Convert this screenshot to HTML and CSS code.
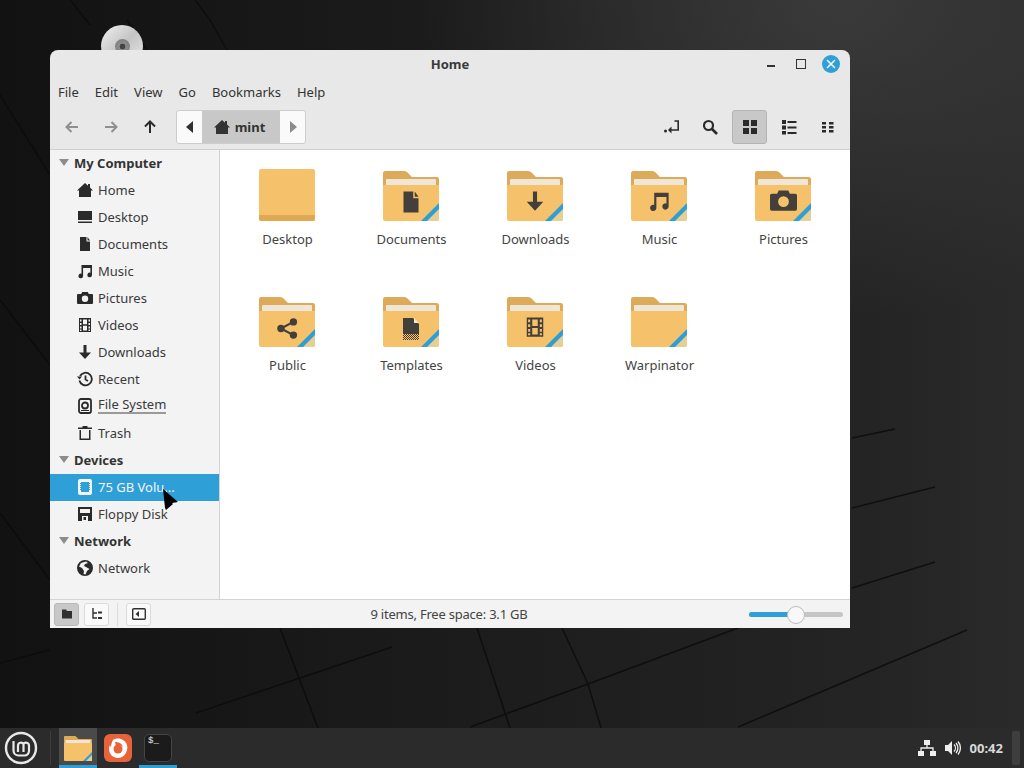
FILE: index.html
```html
<!DOCTYPE html>
<html lang="en">
<head>
    <meta charset="UTF-8">
    <title>Home</title>
    <link rel="stylesheet" href="styles.css">
</head>
<body>
    <svg class="defs" width="0" height="0">
        <defs>
            <pattern id="dither" width="2" height="2" patternUnits="userSpaceOnUse"><path d="M0 0h1v1H0zM1 1h1v1H1z" fill="#433f3b"/></pattern>
            <symbol id="folder" viewBox="0 0 56 50">
                <path d="M2 0h19c2 0 3 1 4 2l4 4h25c1 0 2 1 2 2v14H0V2c0-1 1-2 2-2z" fill="#dcaa58"/>
                <rect x="3" y="8" width="50" height="8" rx="1" fill="#efe6d6"/>
                <path d="M0 14h56v34c0 1-1 2-2 2H2c-1 0-2-1-2-2z" fill="#f6c16b"/>
                <path d="M56 38v10c0 1-1 2-2 2H44z" fill="#e6cf95"/>
                <path d="M56 32v6L44 50h-6z" fill="#2e9fd6"/>
            </symbol>
            <symbol id="i-home" viewBox="0 0 16 16"><path d="M8 1l3 2.700V2h2v3.500L16 8.500h-2V15H2V8.500H0z" fill="currentColor"/></symbol>
            <symbol id="i-desktop" viewBox="0 0 16 16"><path d="M1 2h14v9H1zM1 12.500h14V14H1z" fill="currentColor"/></symbol>
            <symbol id="i-doc" viewBox="0 0 16 16"><path d="M3 1h6.500v4.500H13V15H3zM10.500 1L13 4.500h-2.500z" fill="currentColor"/></symbol>
            <symbol id="i-music" viewBox="0 0 16 16"><path d="M4.500 2H15v10a2.300 2.300 0 1 1-1.600-2.200V5H6.100v8a2.300 2.300 0 1 1-1.600-2.200z" fill="currentColor"/></symbol>
            <symbol id="i-camera" viewBox="0 0 16 16"><path fill-rule="evenodd" d="M1 4h3.200l1-2h5.600l1 2H15a1 1 0 0 1 1 1v8a1 1 0 0 1-1 1H1a1 1 0 0 1-1-1V5a1 1 0 0 1 1-1zm7 1.500a3.200 3.200 0 1 0 0 6.400 3.200 3.200 0 0 0 0-6.400z" fill="currentColor"/></symbol>
            <symbol id="i-film" viewBox="0 0 16 16"><path fill-rule="evenodd" d="M2 1h12v14H2zM3 2.500v2h1.500v-2zM3 6v2h1.500V6zM3 9.500v2h1.500v-2zM3 12.500V14h1.500v-1.500zM11.500 2.500v2H13v-2zM11.500 6v2H13V6zM11.500 9.500v2H13v-2zM11.500 12.500V14H13v-1.500zM6 2.500V7.300h4V2.500zM6 8.700v4.800h4V8.700z" fill="currentColor"/></symbol>
            <symbol id="i-down" viewBox="0 0 16 16"><path d="M6.500 1h3v7.500H14L8 15 2 8.500h4.500z" fill="currentColor"/></symbol>
            <symbol id="i-recent" viewBox="0 0 16 16"><path d="M3 5a6.300 6.300 0 1 1-.6 4.500M8.500 4.500V8.500l2.500 1.500" fill="none" stroke="currentColor" stroke-width="1.800"/><path d="M0 5.500h5L2.500 8.500z" fill="currentColor"/></symbol>
            <symbol id="i-disk" viewBox="0 0 16 16"><rect x="2" y="1" width="12" height="14" rx="2" fill="none" stroke="currentColor" stroke-width="1.800"/><circle cx="8" cy="7.500" r="3" fill="none" stroke="currentColor" stroke-width="1.800"/><rect x="4" y="12" width="8" height="1" fill="currentColor"/></symbol>
            <symbol id="i-trash" viewBox="0 0 16 16"><path d="M5.500 1h5v1.500H15V4H1V2.500h4.500zM2.500 5H4v8.500h8V5h1.500v10h-11z" fill="currentColor"/></symbol>
            <symbol id="i-chip" viewBox="0 0 16 16"><path fill-rule="evenodd" d="M3 0h10a2 2 0 0 1 2 2v12a2 2 0 0 1-2 2H3a2 2 0 0 1-2-2V2a2 2 0 0 1 2-2zm1 3v1H3v1h1v1H3v1h1v1H3v1h1v1H3v1h1v2h8v-2h1v-1h-1V9h1V8h-1V7h1V6h-1V5h1V4h-1V3z" fill="currentColor"/></symbol>
            <symbol id="i-floppy" viewBox="0 0 16 16"><path fill-rule="evenodd" d="M1 1h14v14H1zM3 3v4h10V3zM5 10v5h6v-5zM6.500 11H9v3H6.500z" fill="currentColor"/></symbol>
            <symbol id="i-globe" viewBox="0 0 16 16"><path fill-rule="evenodd" d="M8 0a8 8 0 1 1 0 16A8 8 0 0 1 8 0zM4 3L2 6.500l3 1.500 2 3-.5 3 2 .5 1.500-3.500 2.500-2L9 7 7 6l1-2 3-1-2-1.500z" fill="currentColor"/></symbol>
            <symbol id="i-share" viewBox="0 0 16 16"><circle cx="12.500" cy="3" r="2.800" fill="currentColor"/><circle cx="3" cy="8" r="2.800" fill="currentColor"/><circle cx="12.500" cy="13" r="2.800" fill="currentColor"/><path d="M3 8l9.500-5M3 8l9.500 5" stroke="currentColor" stroke-width="1.600"/></symbol>
        </defs>
    </svg>

    <main class="desktop">
        <svg class="wallpaper" viewBox="0 0 1024 728" width="1024" height="728">
            <g fill="none" stroke="#0c0c0c" stroke-width="1.500" opacity=".85">
                <path d="M280 628L318 728M477 628L510 728M562 628L588 684L601 728M738 628L588 684L470 727M967 630L738 727"/>
                <path d="M0 663L50 650M392 647L196 713M0 513L50 580M0 300L50 365M0 95L50 175"/>
                <path d="M127 20L147 50M210 20L227 50M70 0L90 25M195 0L210 20"/>
                <path d="M852 438L895 429M852 508L935 487M852 588L935 562"/>
            </g>
        </svg>

        <div class="disc"><span class="disc-hole"></span></div>

        <section class="window">
            <header class="titlebar">
                <h1>Home</h1>
                <div class="win-controls">
                    <span class="win-min"></span>
                    <span class="win-max"></span>
                    <span class="win-close">
                        <svg width="10" height="10" viewBox="0 0 10 10"><path d="M1 1l8 8M9 1l-8 8" stroke="#fff" stroke-width="1.500"/></svg>
                    </span>
                </div>
            </header>

            <nav class="menubar">
                <span>File</span><span>Edit</span><span>View</span><span>Go</span><span>Bookmarks</span><span>Help</span>
            </nav>

            <div class="toolbar">
                <div class="nav-buttons">
                    <button class="tool dim"><svg width="16" height="16" viewBox="0 0 16 16"><path d="M14 8H3M7.500 3L2.500 8l5 5" fill="none" stroke="currentColor" stroke-width="2"/></svg></button>
                    <button class="tool dim"><svg width="16" height="16" viewBox="0 0 16 16"><path d="M2 8h11M8.500 3l5 5-5 5" fill="none" stroke="currentColor" stroke-width="2"/></svg></button>
                    <button class="tool"><svg width="16" height="16" viewBox="0 0 16 16"><path d="M8 14V3M3 7.500L8 2.500l5 5" fill="none" stroke="currentColor" stroke-width="2"/></svg></button>
                </div>
                <div class="pathbar">
                    <button class="path-arrow"><svg width="8" height="12" viewBox="0 0 8 12"><path d="M7 0v12L0 6z" fill="#303030"/></svg></button>
                    <button class="path-current"><svg width="16" height="16"><use href="#i-home"/></svg>mint</button>
                    <button class="path-arrow"><svg width="8" height="12" viewBox="0 0 8 12"><path d="M1 0v12l7-6z" fill="#8c8c8c"/></svg></button>
                </div>
                <div class="view-buttons">
                    <button class="tool"><svg width="16" height="16" viewBox="0 0 16 16"><path d="M10.500 2H14.200V11H6" fill="none" stroke="currentColor" stroke-width="1.600"/><path d="M7.500 7.500L4 11l3.500 3.500z" fill="currentColor"/><circle cx="1.500" cy="12" r="1.500" fill="currentColor"/></svg></button>
                    <button class="tool"><svg width="16" height="16" viewBox="0 0 16 16"><circle cx="5.500" cy="6.500" r="4.500" fill="none" stroke="currentColor" stroke-width="2.200"/><path d="M9 10l5 5" stroke="currentColor" stroke-width="2.600"/></svg></button>
                    <button class="tool active"><svg width="16" height="16" viewBox="0 0 16 16"><path d="M1 1h6v6H1zM9 1h6v6H9zM1 9h6v6H1zM9 9h6v6H9z" fill="currentColor"/></svg></button>
                    <button class="tool"><svg width="16" height="16" viewBox="0 0 16 16"><path d="M1 1h4v4H1zM1 6.500h4v4H1zM1 12h4v3.500H1zM6.500 2h9v2h-9zM6.500 7.500h9v2h-9zM6.500 13h9v2h-9z" fill="currentColor"/></svg></button>
                    <button class="tool"><svg width="16" height="16" viewBox="0 0 16 16"><path d="M2 3h4v2.500H2zM9 3h4.500v2.500H9zM2 7h4v2.500H2zM9 7h4.500v2.500H9zM2 11h4v2.500H2zM9 11h4.500v2.500H9z" fill="currentColor"/></svg></button>
                </div>
            </div>

            <div class="panes">
                <aside class="sidebar">
                    <div class="side-head"><span class="caret"></span>My Computer</div>
                    <div class="side-row"><svg width="16" height="16"><use href="#i-home"/></svg>Home</div>
                    <div class="side-row"><svg width="16" height="16"><use href="#i-desktop"/></svg>Desktop</div>
                    <div class="side-row"><svg width="16" height="16"><use href="#i-doc"/></svg>Documents</div>
                    <div class="side-row"><svg width="16" height="16"><use href="#i-music"/></svg>Music</div>
                    <div class="side-row"><svg width="16" height="16"><use href="#i-camera"/></svg>Pictures</div>
                    <div class="side-row"><svg width="16" height="16"><use href="#i-film"/></svg>Videos</div>
                    <div class="side-row"><svg width="16" height="16"><use href="#i-down"/></svg>Downloads</div>
                    <div class="side-row"><svg width="16" height="16"><use href="#i-recent"/></svg>Recent</div>
                    <div class="side-row"><svg width="16" height="16"><use href="#i-disk"/></svg><span class="usage">File System</span></div>
                    <div class="side-row"><svg width="16" height="16"><use href="#i-trash"/></svg>Trash</div>
                    <div class="side-head"><span class="caret"></span>Devices</div>
                    <div class="side-row selected"><svg width="16" height="16"><use href="#i-chip"/></svg>75 GB Volu...</div>
                    <div class="side-row"><svg width="16" height="16"><use href="#i-floppy"/></svg>Floppy Disk</div>
                    <div class="side-head"><span class="caret"></span>Network</div>
                    <div class="side-row"><svg width="16" height="16"><use href="#i-globe"/></svg>Network</div>
                </aside>

                <div class="files">
                    <div class="file">
                        <svg width="56" height="52" viewBox="0 0 56 52"><rect width="56" height="52" rx="2" fill="#f6c16b"/><path d="M0 46h56v4c0 1-1 2-2 2H2c-1 0-2-1-2-2z" fill="#dfa954"/></svg>
                        <span>Desktop</span>
                    </div>
                    <div class="file">
                        <svg class="folder" width="56" height="50"><use href="#folder"/><use href="#i-doc" x="16" y="19" width="24" height="24"/></svg>
                        <span>Documents</span>
                    </div>
                    <div class="file">
                        <svg class="folder" width="56" height="50"><use href="#folder"/><use href="#i-down" x="17" y="19" width="22" height="22"/></svg>
                        <span>Downloads</span>
                    </div>
                    <div class="file">
                        <svg class="folder" width="56" height="50"><use href="#folder"/><use href="#i-music" x="17" y="19" width="22" height="22"/></svg>
                        <span>Music</span>
                    </div>
                    <div class="file">
                        <svg class="folder" width="56" height="50"><use href="#folder"/><use href="#i-camera" x="15" y="16" width="27" height="27"/></svg>
                        <span>Pictures</span>
                    </div>
                    <div class="file">
                        <svg class="folder" width="56" height="50"><use href="#folder"/><use href="#i-share" x="18" y="21" width="21" height="21"/></svg>
                        <span>Public</span>
                    </div>
                    <div class="file">
                        <svg class="folder" width="56" height="50"><use href="#folder"/><path d="M20 21h10l6 6v10H20z" fill="#433f3b"/><path d="M31 21l5 5h-5z" fill="#efe6d6"/><rect x="20" y="37" width="16" height="6" fill="url(#dither)"/></svg>
                        <span>Templates</span>
                    </div>
                    <div class="file">
                        <svg class="folder" width="56" height="50"><use href="#folder"/><use href="#i-film" x="17" y="19" width="22" height="22"/></svg>
                        <span>Videos</span>
                    </div>
                    <div class="file">
                        <svg class="folder" width="56" height="50"><use href="#folder"/></svg>
                        <span>Warpinator</span>
                    </div>
                </div>
            </div>

            <footer class="statusbar">
                <div class="status-left">
                    <button class="status-btn active"><svg width="12" height="12" viewBox="0 0 12 12"><path d="M1 1.500h4l1 1.500h5v7.500H1z" fill="#303030"/></svg></button>
                    <button class="status-btn"><svg width="12" height="12" viewBox="0 0 12 12"><path d="M2 0v10h4M2 5h4" fill="none" stroke="#303030" stroke-width="1.400"/><path d="M7 3.500h4v2H7zM7 9h4v2H7z" fill="#303030"/></svg></button>
                    <span class="status-sep"></span>
                    <button class="status-btn"><svg width="14" height="12" viewBox="0 0 14 12"><rect x=".7" y=".7" width="12.600" height="10.600" rx="1" fill="none" stroke="#303030" stroke-width="1.400"/><path d="M7 3v6L3.500 6z" fill="#303030"/></svg></button>
                </div>
                <div class="status-text">9 items, Free space: 3.1 GB</div>
                <div class="zoom-slider"><span class="zoom-fill"></span><span class="zoom-thumb"></span></div>
            </footer>
        </section>

        <svg class="pointer" width="18" height="22" viewBox="0 0 18 22"><path d="M1 0L16 13l-6 1 1 1-7 6-1-2z" fill="#000"/></svg>
    </main>

    <footer class="panel">
        <div class="panel-left">
            <button class="menu-btn">
                <svg width="34" height="34" viewBox="0 0 34 34"><circle cx="17" cy="17" r="15" fill="none" stroke="#e8e8e8" stroke-width="2.400"/><path d="M9.500 10v9.500a5 5 0 0 0 5 5h6a4.500 4.500 0 0 0 4.500-4.500v-5.500a3 3 0 0 0-5.500-1.500 3 3 0 0 0-5.500 1.500V21M19.500 13v8" fill="none" stroke="#e8e8e8" stroke-width="2.200"/></svg>
            </button>
            <span class="panel-sep"></span>
            <div class="launcher running focused">
                <svg width="28" height="25" viewBox="0 0 56 50"><use href="#folder"/></svg>
            </div>
            <div class="launcher">
                <span class="fox">
                    <svg width="28" height="28" viewBox="0 0 28 28"><path d="M9 6c3-2 7-2 10 0 4 2 5 7 4 10-1 5-5 8-9 8-5 0-9-4-9-9 0-1 .5-3 1-4 0 1 1 2 1 2 0-3 1-5 2-7z" fill="#fff"/><circle cx="14" cy="15" r="4.500" fill="#e8633a"/><path d="M11 8c3 0 7 1 8 5-2-2-5-2-7-1z" fill="#e8633a"/></svg>
                </span>
            </div>
            <div class="launcher running">
                <span class="term">$_</span>
            </div>
        </div>
        <div class="tray">
            <svg width="18" height="16" viewBox="0 0 18 16"><path d="M6 0h6v5H6zM0 11h6v5H0zM12 11h6v5h-6z" fill="#eee"/><path d="M9 5v3M3 11V8h12v3" fill="none" stroke="#eee" stroke-width="1.300"/></svg>
            <svg width="16" height="16" viewBox="0 0 16 16"><path d="M0 5h3l4-4v14l-4-4H0z" fill="#eee"/><path d="M9 4.500a5 5 0 0 1 0 7M11 3a7.500 7.500 0 0 1 0 10M13 1.500a10 10 0 0 1 0 13" fill="none" stroke="#eee" stroke-width="1.300"/></svg>
            <span class="clock">00:42</span>
            <span class="panel-handle"></span>
        </div>
    </footer>
</body>
</html>
```

FILE: styles.css
```css
/* desktop */
* { box-sizing: border-box; }
body {
    margin: 0;
    width: 1024px;
    height: 768px;
    overflow: hidden;
    display: flex;
    flex-direction: column;
    font-family: "Noto Sans", "Open Sans", sans-serif;
    font-size: 13px;
    color: #3a3a3a;
    background: #191919;
}
button { font: inherit; color: inherit; border: 0; background: none; padding: 0; }
.defs { position: absolute; }
.desktop {
    position: relative;
    flex: 1;
    overflow: hidden;
    background:
        radial-gradient(ellipse 420px 320px at 82% 0%, #3a3a3a, transparent),
        linear-gradient(90deg, #121212, #1c1c1c 45%, #242424 85%, #2a2a2a);
}
.wallpaper { position: absolute; left: 0; top: 0; }
.disc {
    position: absolute;
    left: 101px;
    top: 25px;
    width: 42px;
    height: 42px;
    border-radius: 50%;
    background: linear-gradient(135deg, #f2f2f2, #c4c4c4 50%, #ebebeb);
    display: flex;
    align-items: center;
    justify-content: center;
}
.disc-hole { width: 15px; height: 15px; border-radius: 50%; background: radial-gradient(circle, #444 25%, #8d8d8d 30%, #777 100%); }
.pointer { position: absolute; left: 162px; top: 489px; }

/* window */
.window {
    position: absolute;
    left: 50px;
    top: 50px;
    width: 800px;
    height: 578px;
    display: flex;
    flex-direction: column;
    background: #e8e8e8;
    border-radius: 8px 8px 0 0;
    overflow: hidden;
}
.titlebar { height: 28px; display: flex; align-items: center; justify-content: center; position: relative; }
.titlebar h1 { margin: 0; font-size: 13px; font-weight: 700; color: #3a3a3a; }
.win-controls { position: absolute; right: 10px; top: 5px; display: flex; align-items: center; gap: 12px; }
.win-controls span { width: 18px; height: 18px; display: flex; align-items: center; justify-content: center; }
.win-min::before { content: ""; width: 8px; height: 1.500px; background: #333; margin-top: 4px; }
.win-max::before { content: ""; width: 8px; height: 8px; border: 1.500px solid #333; }
.win-close { background: #2f9fd8; border-radius: 50%; }
.menubar { height: 28px; display: flex; align-items: center; gap: 16px; padding-left: 8px; color: #333; }
.toolbar {
    height: 44px;
    display: flex;
    align-items: center;
    padding: 0 5px 1px 4px;
    border-bottom: 1px solid #cfcfcf;
}
.tool { width: 35px; height: 34px; display: flex; align-items: center; justify-content: center; color: #2a2a2a; border-radius: 3px; border: 1px solid transparent; }
.tool.dim { color: #8f8f8f; }
.tool.active { background: #c8c8c8; border-color: #b4b4b4; }
.nav-buttons { display: flex; gap: 4px; }
.pathbar {
    display: flex;
    height: 34px;
    margin-left: 9px;
    background: #fafafa;
    border: 1px solid #cdcdcd;
    border-radius: 3px;
    overflow: hidden;
}
.path-arrow { width: 25px; display: flex; align-items: center; justify-content: center; }
.path-current { width: 78px; padding-right: 3px; background: #c8c8c8; display: flex; align-items: center; justify-content: center; gap: 5px; font-weight: 700; color: #333; }
.view-buttons { margin-left: auto; display: flex; gap: 4px; }

/* panes */
.panes { flex: 1; display: flex; min-height: 0; }
.sidebar { width: 171px; background: #f3f3f3; border-right: 1px solid #d4d4d4; }
.side-head { height: 27px; display: flex; align-items: center; padding: 0 0 2px 9px; font-weight: 700; color: #333; }
.caret { width: 0; height: 0; border: 5.500px solid transparent; border-top: 7px solid #8c8c8c; border-bottom: 0; margin-right: 5px; }
.side-row { height: 27px; display: flex; align-items: center; gap: 5px; padding: 0 0 2px 27px; }
.side-row svg { color: #2a2a2a; flex: none; }
.side-row.selected { background: #2f9fd8; color: #f4f4f4; }
.side-row.selected svg { color: #f4f4f4; }
.usage { border-bottom: 2px solid #9a9a9a; line-height: 15px; }
.files {
    flex: 1;
    background: #fff;
    padding: 19px 5px 0;
    display: grid;
    grid-template-columns: repeat(5, 124px);
    grid-auto-rows: 126px;
    align-content: start;
}
.file { display: flex; flex-direction: column; align-items: center; color: #444; }
.file svg { color: #433f3b; }
.file .folder { margin-top: 2px; }
.file span { margin-top: 9px; padding-left: 1px; }

/* status bar */
.statusbar {
    height: 29px;
    display: flex;
    align-items: center;
    position: relative;
    background: #f3f3f3;
    border-top: 1px solid #d4d4d4;
    padding: 0 7px 0 4px;
}
.status-left { display: flex; align-items: center; gap: 5px; }
.status-btn { width: 25px; height: 23px; display: flex; align-items: center; justify-content: center; background: #fafafa; border: 1px solid #dadada; border-radius: 3px; }
.status-btn.active { background: #c8c8c8; border-color: #b8b8b8; }
.status-sep { width: 1px; height: 23px; background: #dcdcdc; margin: 0 3px; }
.status-text { position: absolute; left: 0; right: 2px; text-align: center; color: #444; letter-spacing: -0.22px; pointer-events: none; }
.zoom-slider { margin-left: auto; width: 94px; height: 5px; border-radius: 3px; background: #c6c6c6; position: relative; }
.zoom-fill { position: absolute; left: 0; top: 0; bottom: 0; width: 47px; background: #2f9fd8; border-radius: 3px; }
.zoom-thumb { position: absolute; left: 38px; top: -6px; width: 18px; height: 18px; border-radius: 50%; background: #f8f8f8; border: 1px solid #bdbdbd; }

/* panel */
.panel {
    height: 40px;
    background: #2b2b2b;
    display: flex;
    align-items: stretch;
    justify-content: space-between;
    color: #e4e4e4;
}
.panel-left { display: flex; align-items: stretch; }
.menu-btn { width: 42px; display: flex; align-items: center; justify-content: center; }
.panel-sep { width: 1px; background: #3e3e3e; margin: 3px 8px; }
.launcher { width: 38px; margin-right: 2px; display: flex; align-items: center; justify-content: center; border-bottom: 3px solid transparent; padding-top: 3px; }
.launcher.running { border-bottom-color: #2f9fd8; }
.launcher.focused { background: #4a4a4a; }
.fox { width: 28px; height: 28px; border-radius: 6px; background: #e8633a; display: block; }
.term {
    width: 28px;
    height: 28px;
    border-radius: 5px;
    background: #1b1b1b;
    border: 1px solid #444;
    font-family: "Liberation Mono", monospace;
    font-size: 9px;
    line-height: 11px;
    padding: 1px 0 0 3px;
    color: #eee;
}
.tray { display: flex; align-items: center; gap: 9px; padding-right: 4px; }
.clock { font-size: 13px; font-weight: 700; color: #d8d8d8; }
.panel-handle { width: 8px; height: 34px; background: #3e3e3e; border-radius: 2px; }
```
